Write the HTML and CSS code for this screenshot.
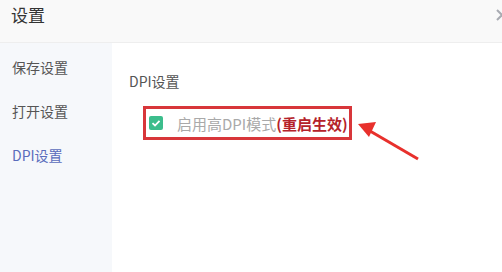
FILE: index.html
```html
<!DOCTYPE html>
<html lang="zh-CN">
<head>
    <meta charset="UTF-8">
    <title>设置</title>
    <link rel="stylesheet" href="styles.css">
</head>
<body>
    <div class="dialog">
        <div class="header">
            <span class="title">设置</span>
            <svg class="close" width="14" height="14" viewBox="0 0 14 14">
                <path d="M2 2 L12 12 M12 2 L2 12" stroke="#a8abb2" stroke-width="2" fill="none"/>
            </svg>
        </div>
        <div class="body">
            <div class="sidebar">
                <div class="nav-item">保存设置</div>
                <div class="nav-item">打开设置</div>
                <div class="nav-item active">DPI设置</div>
            </div>
            <div class="content">
                <div class="section-title">DPI设置</div>
                <label class="option">
                    <span class="check">
                        <svg width="14" height="14" viewBox="0 0 14 14">
                            <path d="M3.5 7.2 L6 9.5 L10.5 4.8" stroke="#fff" stroke-width="1.8" fill="none"/>
                        </svg>
                    </span>
                    <span class="label">启用高DPI模式<b class="note">(重启生效)</b></span>
                </label>
                <svg class="arrow" width="80" height="50" viewBox="0 0 80 50">
                    <path d="M62 44 L14 16" stroke="#e8302c" stroke-width="3" fill="none"/>
                    <polygon points="2,9 20,7 13,22" fill="#e8302c"/>
                </svg>
            </div>
        </div>
    </div>
</body>
</html>
```

FILE: styles.css
```css
* {
    margin: 0;
    padding: 0;
    box-sizing: border-box;
}

body {
    font-family: "Noto Sans CJK SC", "Noto Sans", sans-serif;
    background: #ffffff;
    width: 502px;
    height: 272px;
    overflow: hidden;
}

.dialog {
    display: flex;
    flex-direction: column;
    height: 272px;
}

.header {
    height: 43px;
    background: #f9f9f9;
    border-bottom: 1px solid #eeeeee;
    display: flex;
    align-items: center;
    justify-content: space-between;
    position: relative;
}

.title {
    font-size: 17px;
    color: #333;
    margin-left: 11px;
    margin-top: -14px;
}

.close {
    position: absolute;
    right: -7px;
    top: 8px;
}

.body {
    flex: 1;
    display: flex;
}

.sidebar {
    width: 112px;
    background: #f6f8fb;
    padding-top: 14px;
}

.nav-item {
    font-size: 14px;
    color: #555;
    padding-left: 12px;
    height: 44px;
    line-height: 20px;
}

.nav-item.active {
    color: #5a6cbc;
}

.content {
    flex: 1;
    position: relative;
    padding: 28px 0 0 17px;
}

.section-title {
    font-size: 14px;
    color: #555;
    line-height: 20px;
}

.option {
    display: inline-flex;
    align-items: center;
    margin-top: 15px;
    margin-left: 14px;
    height: 34px;
    width: 209px;
    border: 3px solid #d8363a;
    padding-left: 3px;
}

.check {
    width: 14px;
    height: 14px;
    background: #3cbd8c;
    border-radius: 2px;
    display: flex;
}

.label {
    margin-left: 14px;
    font-size: 15px;
    color: #a9a9a9;
    white-space: nowrap;
}

.note {
    color: #b5222a;
    font-weight: bold;
}

.arrow {
    position: absolute;
    left: 244px;
    top: 72px;
}
```
